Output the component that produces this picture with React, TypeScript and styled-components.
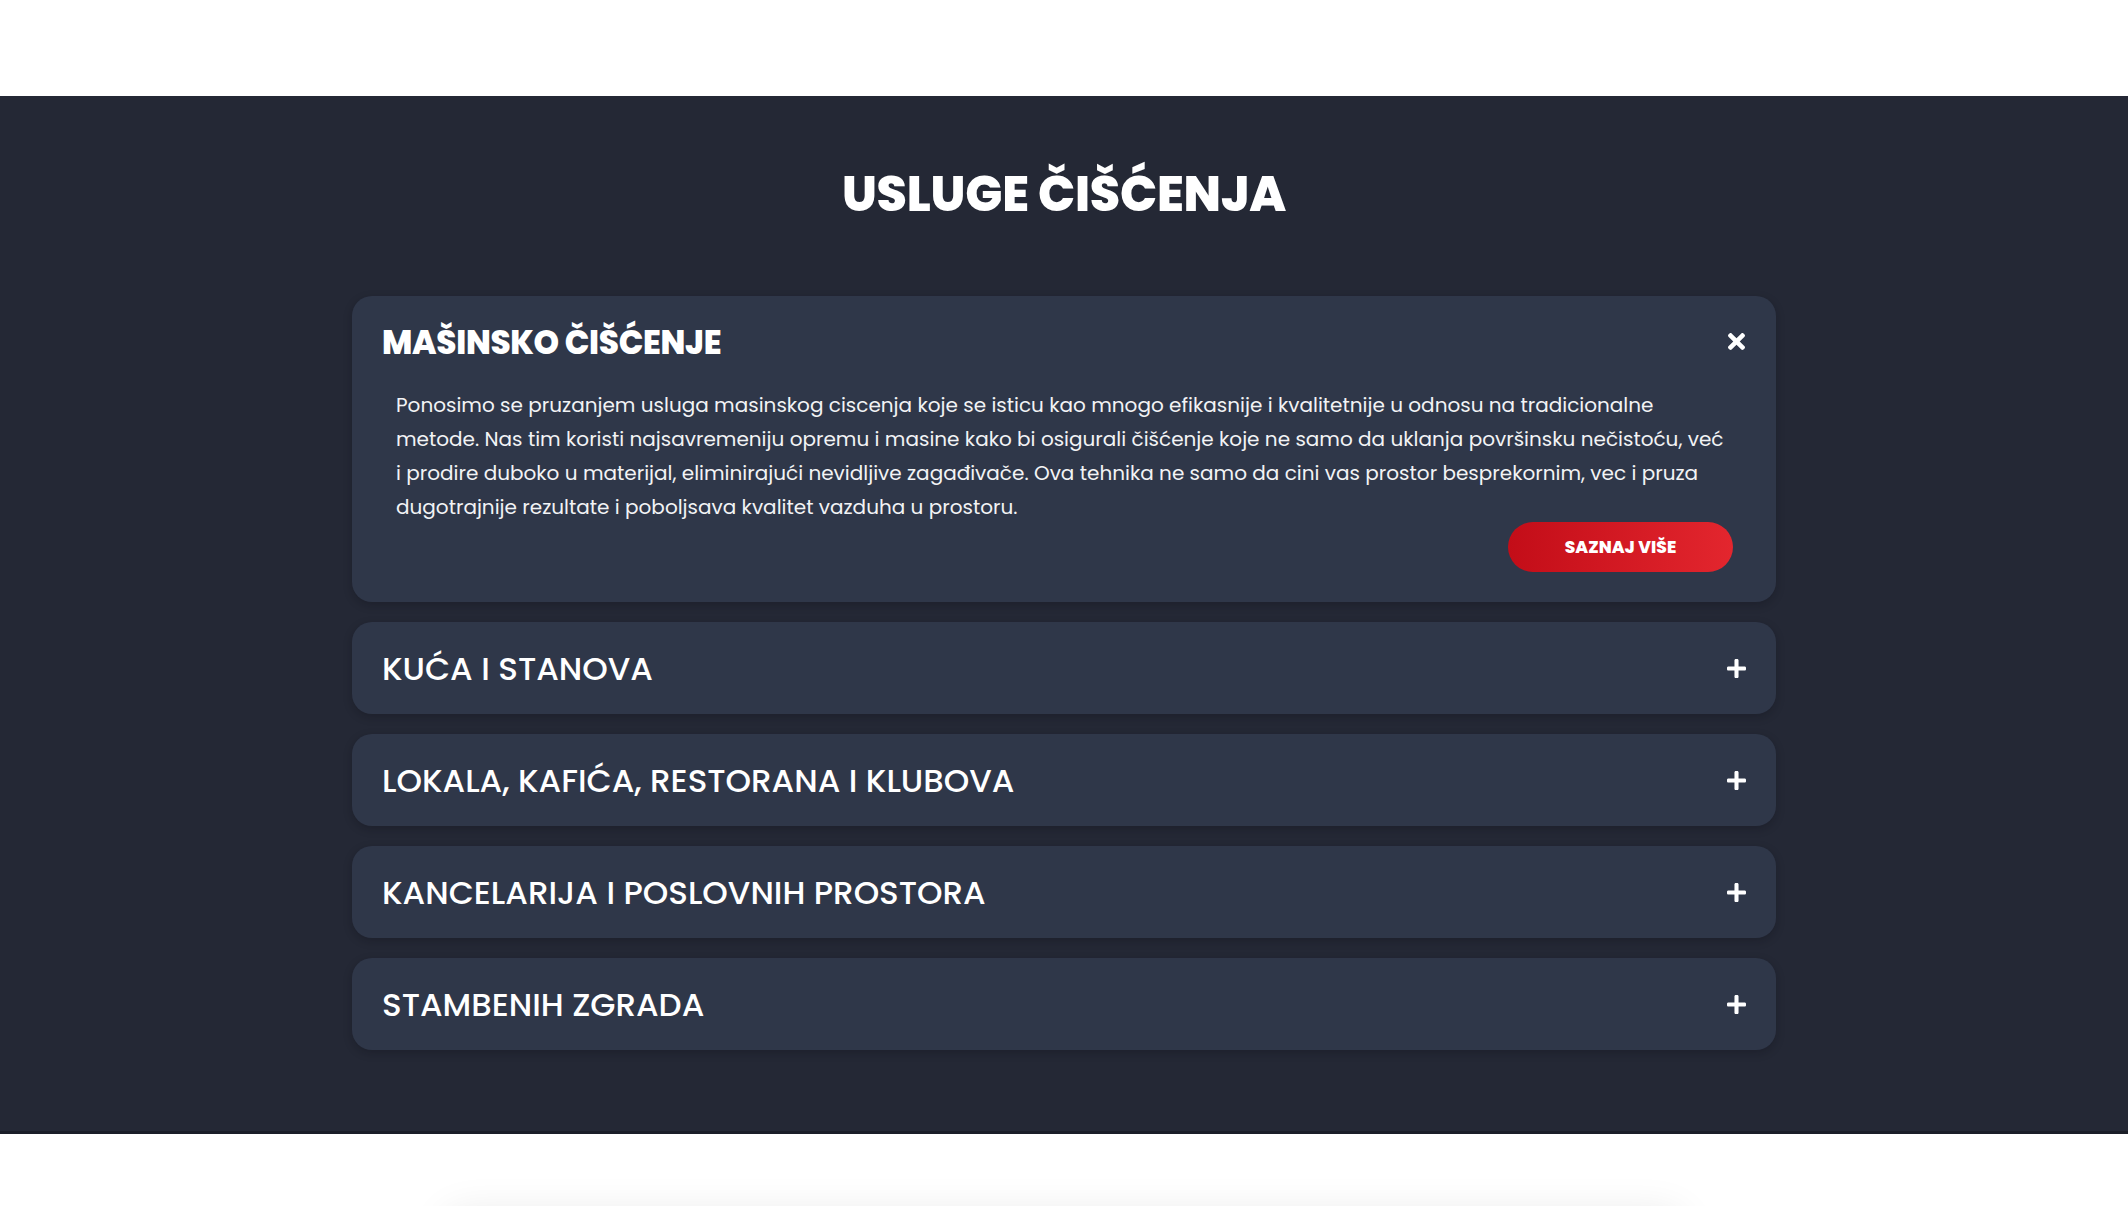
import React, { useState } from "react";
import styled, { createGlobalStyle } from "styled-components";

const GlobalStyle = createGlobalStyle`
  * { box-sizing: border-box; }
  body {
    margin: 0;
    background: #ffffff;
    font-family: "Poppins", "Inter", "Open Sans", sans-serif;
  }
`;

const TopBar = styled.header`
  height: 96px;
  background: #ffffff;
`;

const Section = styled.section`
  background: #242835;
  padding: 67px 0 81px;
  border-bottom: 3px solid #1b1e28;
`;

const Title = styled.h2`
  margin: 0 0 71px;
  text-align: center;
  color: #ffffff;
  font-size: 49px;
  line-height: 62px;
  font-weight: 800;
  letter-spacing: -0.2px;
`;

const Accordion = styled.div`
  width: 1424px;
  margin: 0 auto;
  display: flex;
  flex-direction: column;
  gap: 20px;
`;

const Item = styled.div`
  background: #2f3749;
  border-radius: 20px;
  box-shadow: 0 3px 8px rgba(10, 12, 20, 0.25);
  overflow: hidden;
`;

const Header = styled.button`
  all: unset;
  box-sizing: border-box;
  width: 100%;
  height: 92px;
  padding: 0 30px;
  display: flex;
  align-items: center;
  justify-content: space-between;
  cursor: pointer;
`;

const ItemTitle = styled.h3<{ $open: boolean }>`
  margin: 0;
  color: #ffffff;
  font-size: 32.5px;
  font-weight: ${(p) => (p.$open ? 800 : 500)};
  letter-spacing: ${(p) => (p.$open ? "-0.3px" : "0px")};
  line-height: 1.2;
`;

const IconBox = styled.span<{ $open: boolean }>`
  width: 20px;
  height: 20px;
  display: flex;
  align-items: center;
  justify-content: center;
  color: #ffffff;
  margin-top: ${(p) => (p.$open ? "-2px" : "0")};
`;

const Body = styled.div`
  padding: 0 43px 30px 44px;
  display: flex;
  flex-direction: column;
`;

const Text = styled.p`
  margin: 0;
  color: #f2f3f5;
  font-size: 20px;
  line-height: 34px;
  font-weight: 400;
  white-space: nowrap;
`;

const ButtonRow = styled.div`
  display: flex;
  justify-content: flex-end;
  margin-top: -2px;
`;

const MoreButton = styled.a`
  width: 225px;
  height: 50px;
  border-radius: 25px;
  background: linear-gradient(90deg, #c30d18 0%, #e3262e 100%);
  color: #ffffff;
  font-size: 17px;
  font-weight: 800;
  letter-spacing: 0.1px;
  display: flex;
  align-items: center;
  justify-content: center;
  text-decoration: none;
`;

const Below = styled.div`
  height: 80px;
  background: #ffffff;
  padding-top: 84px;
  overflow: hidden;
`;

const NextCard = styled.div`
  width: 1240px;
  height: 200px;
  margin: 0 auto;
  background: #ffffff;
  border-radius: 20px;
  box-shadow: 0 -6px 40px rgba(0, 0, 0, 0.09);
`;

const CloseIcon = () => (
  <svg width="17" height="17" viewBox="0 0 352 352" fill="currentColor">
    <path d="M242.72 176l100.07-100.07c12.28-12.28 12.28-32.19 0-44.48l-22.24-22.24c-12.28-12.28-32.19-12.28-44.48 0L176 109.28 75.93 9.21c-12.28-12.28-32.19-12.28-44.48 0L9.21 31.45c-12.28 12.28-12.28 32.19 0 44.48L109.28 176 9.21 276.07c-12.28 12.28-12.28 32.19 0 44.48l22.24 22.24c12.28 12.28 32.2 12.28 44.48 0L176 242.72l100.07 100.07c12.28 12.28 32.2 12.28 44.48 0l22.24-22.24c12.28-12.28 12.28-32.19 0-44.48L242.72 176z" />
  </svg>
);

const PlusIcon = () => (
  <svg width="19" height="19" viewBox="0 0 448 448" fill="currentColor">
    <path d="M416 176H272V32c0-17.67-14.33-32-32-32h-32c-17.67 0-32 14.33-32 32v144H32c-17.67 0-32 14.33-32 32v32c0 17.67 14.33 32 32 32h144v144c0 17.670 14.33 32 32 32h32c17.67 0 32-14.33 32-32V272h144c17.67 0 32-14.33 32-32v-32c0-17.67-14.33-32-32-32z" />
  </svg>
);

const items = [
  "MAŠINSKO ČIŠĆENJE",
  "KUĆA I STANOVA",
  "LOKALA, KAFIĆA, RESTORANA I KLUBOVA",
  "KANCELARIJA I POSLOVNIH PROSTORA",
  "STAMBENIH ZGRADA",
];

export default function App() {
  const [open, setOpen] = useState(0);
  return (
    <>
      <GlobalStyle />
      <TopBar />
      <Section>
        <Title>USLUGE ČIŠĆENJA</Title>
        <Accordion>
          {items.map((label, i) => {
            const isOpen = open === i;
            return (
              <Item key={label}>
                <Header onClick={() => setOpen(isOpen ? -1 : i)}>
                  <ItemTitle $open={isOpen}>{label}</ItemTitle>
                  <IconBox $open={isOpen}>{isOpen ? <CloseIcon /> : <PlusIcon />}</IconBox>
                </Header>
                {isOpen && (
                  <Body>
                    <Text>
                      Ponosimo se pruzanjem usluga masinskog ciscenja koje se isticu kao mnogo efikasnije i kvalitetnije u odnosu na tradicionalne
                      <br />
                      metode. Nas tim koristi najsavremeniju opremu i masine kako bi osigurali čišćenje koje ne samo da uklanja površinsku nečistoću, već
                      <br />
                      i prodire duboko u materijal, eliminirajući nevidljive zagađivače. Ova tehnika ne samo da cini vas prostor besprekornim, vec i pruza
                      <br />
                      dugotrajnije rezultate i poboljsava kvalitet vazduha u prostoru.
                    </Text>
                    <ButtonRow>
                      <MoreButton href="#">SAZNAJ VIŠE</MoreButton>
                    </ButtonRow>
                  </Body>
                )}
              </Item>
            );
          })}
        </Accordion>
      </Section>
      <Below>
        <NextCard />
      </Below>
    </>
  );
}
